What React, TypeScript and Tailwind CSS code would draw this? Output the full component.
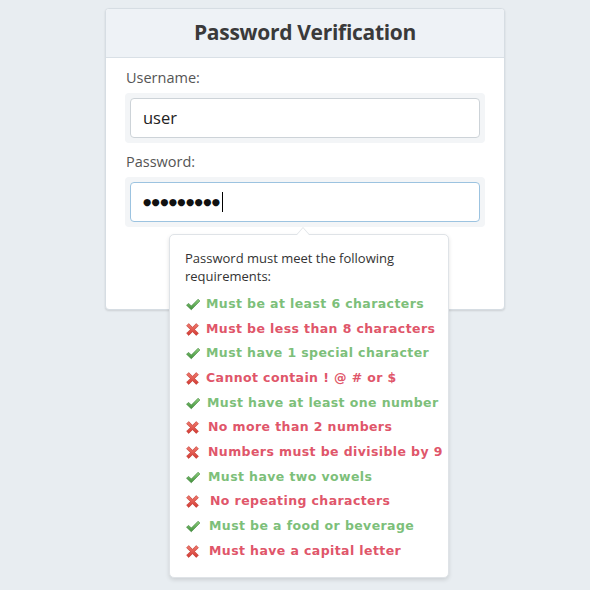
import React from "react";

interface Rule {
  text: string;
  ok: boolean;
  pad: string;
}

const rules: Rule[] = [
  { text: "Must be at least 6 characters", ok: true, pad: "pl-0" },
  { text: "Must be less than 8 characters", ok: false, pad: "pl-0" },
  { text: "Must have 1 special character", ok: true, pad: "pl-0" },
  { text: "Cannot contain ! @ # or $", ok: false, pad: "pl-0" },
  { text: "Must have at least one number", ok: true, pad: "pl-px" },
  { text: "No more than 2 numbers", ok: false, pad: "pl-[2px]" },
  { text: "Numbers must be divisible by 9", ok: false, pad: "pl-[2px]" },
  { text: "Must have two vowels", ok: true, pad: "pl-[2px]" },
  { text: "No repeating characters", ok: false, pad: "pl-[4px]" },
  { text: "Must be a food or beverage", ok: true, pad: "pl-[3px]" },
  { text: "Must have a capital letter", ok: false, pad: "pl-[3px]" },
];

function Check() {
  return (
    <svg width="16" height="13" viewBox="0 0 15 13">
      <defs>
        <linearGradient id="gck" x1="0" y1="0" x2="0" y2="1">
          <stop offset="0" stopColor="#8fd07e" />
          <stop offset="1" stopColor="#3f8f3a" />
        </linearGradient>
      </defs>
      <path d="M1 7.2 L3.2 5.4 L5.8 8 L12.6 1.2 L14.4 3 L5.8 11.8 Z" fill="url(#gck)" stroke="#3b7f36" strokeWidth="0.6" strokeLinejoin="round" />
    </svg>
  );
}

function Cross() {
  return (
    <svg width="15" height="15" viewBox="0 0 14 14">
      <defs>
        <linearGradient id="gx" x1="0" y1="0" x2="0" y2="1">
          <stop offset="0" stopColor="#f07a6e" />
          <stop offset="1" stopColor="#d23a34" />
        </linearGradient>
      </defs>
      <path d="M1.5 3.5 L3.5 1.5 L7 5 L10.5 1.5 L12.5 3.5 L9 7 L12.5 10.5 L10.5 12.5 L7 9 L3.5 12.5 L1.5 10.5 L5 7 Z" fill="url(#gx)" stroke="#c0392f" strokeWidth="0.6" strokeLinejoin="round" />
    </svg>
  );
}

export default function App() {
  return (
    <div className="w-[590px] h-[590px] bg-[#e8edf1] relative overflow-hidden font-['Open_Sans',sans-serif]">
      <div className="ml-[105px] mt-[8px] w-[400px] h-[302px] bg-white rounded-[4px] border border-[#d6dde3] shadow-[0_1px_2px_rgba(0,0,0,0.12)] overflow-hidden">
        <div className="h-[49px] bg-[#eef2f6] border-b border-[#d9e0e6] flex items-center justify-center">
          <h1 className="text-[21px] font-bold text-[#3a3a3a] tracking-[-0.3px]">Password Verification</h1>
        </div>
        <div className="px-[19px] pt-[9px]">
          <label className="block pl-px text-[14.5px] text-[#555] leading-[22px]">Username:</label>
          <div className="mt-[4px] bg-[#f3f5f7] rounded-[4px] p-[5px]">
            <div className="h-[40px] bg-white border border-[#cdd3d8] rounded-[4px] flex items-center px-[12px] text-[16.5px] text-[#222]">
              user
            </div>
          </div>
          <label className="block mt-[8px] pl-px text-[14.5px] text-[#555] leading-[22px]">Password:</label>
          <div className="mt-[4px] bg-[#f3f5f7] rounded-[4px] p-[5px]">
            <div className="h-[40px] bg-white border border-[#9cc3e0] rounded-[4px] flex items-center px-[12px] text-[#111]">
              <span className="font-['DejaVu_Sans',sans-serif] font-bold text-[9.5px] tracking-[0.3px]">●●●●●●●●●</span>
              <span className="w-px h-[20px] bg-black ml-[2px]" />
            </div>
          </div>
        </div>
      </div>

      <div className="absolute left-[169px] top-[234px] w-[280px] h-[344px] bg-white rounded-[5px] border border-[#dfe3e7] shadow-[0_2px_4px_rgba(0,0,0,0.12)]">
        <div className="absolute -top-[8px] left-[126px] w-0 h-0 border-l-[7px] border-r-[7px] border-b-[8px] border-l-transparent border-r-transparent border-b-[#dfe3e7]" />
        <div className="absolute -top-[7px] left-[127px] w-0 h-0 border-l-[6px] border-r-[6px] border-b-[7px] border-l-transparent border-r-transparent border-b-white" />
        <p className="pl-[15px] pr-[12px] pt-[14px] text-[13px] leading-[18px] text-[#333]">
          Password must meet the following requirements:
        </p>
        <ul className="pl-[15px] mt-[10px] flex flex-col gap-[6px]">
          {rules.map((r) => (
            <li key={r.text} className="flex items-center h-[18.7px]">
              <span className="w-[21px] flex justify-start">{r.ok ? <Check /> : <Cross />}</span>
              <span
                className={`${r.pad} font-['DejaVu_Sans',sans-serif] font-bold text-[12.5px] tracking-[0.4px] whitespace-nowrap ${
                  r.ok ? "text-[#7dbf7a]" : "text-[#e0566a]"
                }`}
              >
                {r.text}
              </span>
            </li>
          ))}
        </ul>
      </div>
    </div>
  );
}
